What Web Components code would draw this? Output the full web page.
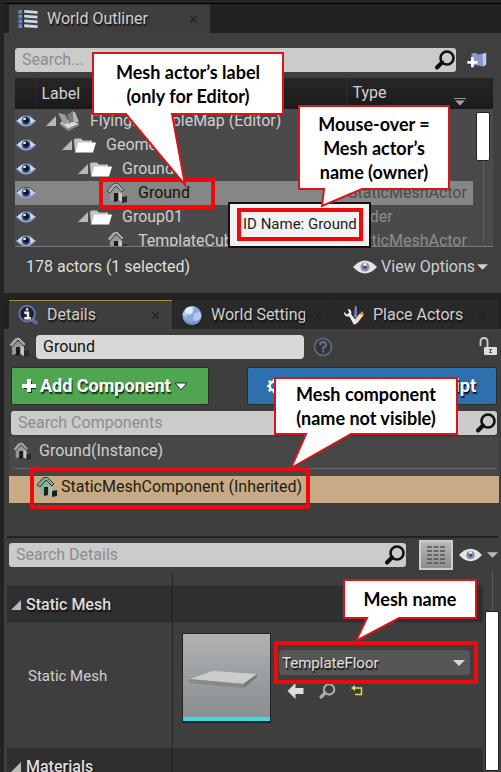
<!DOCTYPE html>
<html lang="en">
<head>
<meta charset="utf-8">
<title>World Outliner and Details</title>
<style>
  html { background: #232323; }
  body { margin: 0; min-height: 100vh; background: #232323; color: #cfcfcf; font: 16px/24px Roboto, "Liberation Sans", sans-serif; }
</style>
</head>
<body>
<ue-editor></ue-editor>
<script>
const ICONS = {
  outliner: ['0 0 22 22', `<path d="M1 1h4v4H1zM1 6h4v4H1zM1 11h4v4H1zM1 16h4v4H1z" fill="#6484c4"/><path d="M7 1l14 1v3L7 4zM7 6l14 1v3L7 9zM7 11l14 1v3L7 14zM7 16l14 1v3L7 19z" fill="#cfd6e6"/><path d="M6 1v19" stroke="#222d48"/>`],
  info: ['0 0 24 22', `<path d="M15 14l7 6" stroke="#5c6a8e" stroke-width="4"/><circle cx="11" cy="9" r="8.5" fill="#1d2233" stroke="#6279ad" stroke-width="2"/><path d="M11 3v2.600M8 8h4v6M8 14h7" stroke="#f2f2f2" stroke-width="2.500" fill="none"/>`],
  globe: ['0 0 22 22', `<circle cx="11" cy="11" r="10" fill="#8ba6da"/><path d="M3 6q5-6 11-4l-3 5-4 1-2 5-4-3zM13 9l6-2 2 5-5 6-4-3z" fill="#b5c8ee"/><circle cx="8" cy="6" r="4" fill="#eef4ff" opacity=".8"/><path d="M4 17q7 5 14-1" stroke="#5c76b0" fill="none"/>`],
  tools: ['0 0 24 22', `<path d="M13 1l2 0v12h-3z" fill="#6d90cf"/><path d="M21 6l2 4-7 8-3-3z" fill="#cd8e52"/><path d="M18 9l4 2-6 8-3-3z" fill="#f5d7ad"/><path d="M1 7q0 6 6 5l5 9 4-2-7-9q1-6-4-6l2 4-3 2z" fill="#f0f0f0"/>`],
  close: ['0 0 10 10', `<path d="M1.500 1.500l7 7m0-7l-7 7" stroke="#222" stroke-width="1.600"/>`],
  mag: ['0 0 20 20', `<circle cx="12" cy="8" r="6.500" fill="none" stroke="currentColor" stroke-width="2.600"/><path d="M7 12.500l-5 5" stroke="currentColor" stroke-width="4" stroke-linecap="round"/>`],
  newfolder: ['0 0 24 20', `<path d="M6 3l5-1 2 2 9-2v13l-3 2L6 15z" fill="#8798cc"/><path d="M18 4l4-2v13l-3 2z" fill="#c3cdeb"/><path d="M7 7v11M1.500 12.500h11" stroke="#fff" stroke-width="3"/>`],
  eye: ['0 0 20 14', `<path d="M0 7Q10-5 20 7Q10 18 0 7z" fill="#8fa3cf"/><path d="M1 6.500Q10-3 19 6.500Q10 14 1 6.500z" fill="#c9d6ee"/><circle cx="10" cy="6.500" r="4.300" fill="#2d4474"/><circle cx="10" cy="6.500" r="2.200" fill="#070b18"/><circle cx="8.500" cy="5" r="1.300" fill="#fff"/><path d="M1 6Q10-4 19 6" fill="none" stroke="#3e5078"/>`],
  eyegrey: ['0 0 24 14', `<path d="M0 7Q12-6 24 7Q12 20 0 7z" fill="#e4e4e4"/><circle cx="12" cy="7" r="4.500" fill="#8592aa"/><circle cx="12" cy="7" r="2" fill="#46536e"/><circle cx="12" cy="4.500" r="1.500" fill="#fff"/>`],
  tri: ['0 0 10 10', `<path d="M10 0v10H0z" fill="#b9b9b9"/>`],
  caret: ['0 0 12 8', `<path d="M0 1h12L6 7z" fill="currentColor"/>`],
  sort: ['0 0 12 8', `<path d="M0 1h12" stroke="#999" stroke-width="1"/><path d="M1 3h10L6 8z" fill="#a2a2a2"/>`],
  map: ['0 0 24 22', `<path d="M2 13l9-3 12 4-12 7z" fill="#dadada"/><path d="M0 2l8 2 4 9-6 2z" fill="#9c9c9c"/><path d="M10 4l6-4 1 11-5 3z" fill="#7a7a7a"/><path d="M16 0l3 2 4 10-6 1z" fill="#b8b8b8"/><path d="M2 13l9 6 12-5v2l-12 6-9-7z" fill="#8a8a8a"/>`],
  folder: ['0 0 22 16', `<path d="M0 3q0-2 2-2h5l2 2h9v3H4L1 14z" fill="#c4c4c4"/><path d="M4 5h18l-3 10H1z" fill="#fff"/><path d="M1 15h18" stroke="#aaa"/>`],
  house: ['0 0 20 20', `<path d="M3 9l6-5 6 5v10l-6-3-6 2z" fill="#979797"/><path d="M7 10h4v8l-4 1z" fill="#1b1b1b"/><path d="M0 8L6 1l4-1 7 7-2 2-6-6-6 7z" fill="#a8a8a8" stroke="#3c3c3c" stroke-width=".9"/><path d="M12 9l3 2v8l-3-2z" fill="#c6c6c6"/><path d="M15 14l5-1v6l-5 1z" fill="#292929"/>`],
  housegreen: ['0 0 20 20', `<path d="M3 9l6-5 6 5v10l-6-3-6 2z" fill="#94afa0"/><path d="M7 10h4v8l-4 1z" fill="#15251f"/><path d="M0 8L6 1l4-1 7 7-2 2-6-6-6 7z" fill="#86a696" stroke="#283c33"/><path d="M12 9l3 2v8l-3-2z" fill="#acc6b9"/><path d="M15 14l5-1v6l-5 1z" fill="#17211d"/>`],
  help: ['0 0 20 20', `<circle cx="10" cy="10" r="8.500" fill="#30343c" stroke="#5d6470" stroke-width="2"/><path d="M7 8q0-3 3-3t3 3q0 1.500-3 3v1.500M10 13.500v2" fill="none" stroke="#6d7584" stroke-width="2"/>`],
  lock: ['0 0 18 20', `<path d="M1.500 9V5q0-4 3.500-4t3.500 4v5" fill="none" stroke="#cfcfcf" stroke-width="1.800"/><rect x="5" y="10" width="13" height="8" rx="1" fill="#dedede"/><path d="M11.500 12v4M10 12.500h3M10 15.500h3" stroke="#555"/>`],
  plus: ['0 0 14 14', `<path d="M7 1v12M1 7h12" stroke="#143616" stroke-width="4" transform="translate(1 1)"/><path d="M7 0v13M0 7h14" stroke="#fff" stroke-width="4"/>`],
  caretline: ['0 0 12 10', `<path d="M0 2h12L6 9z" fill="#fff" stroke="#173419"/>`],
  gear: ['0 0 16 16', `<circle cx="8" cy="8" r="5" fill="none" stroke="#fff" stroke-width="3"/><path d="M8 0v4M8 12v4M0 8h4M12 8h4M2 2l3 3M11 11l3 3M2 14l3-3M11 5l3-3" stroke="#fff" stroke-width="2.500"/>`],
  grid: ['0 0 18 20', `<path d="M0 2h18M0 6h18M0 10h18M0 14h18M0 18h18" stroke="#666" stroke-width="2" stroke-dasharray="5 1.500"/>`],
  back: ['0 0 16 16', `<path d="M0 8l8-8v5h8v6H8v5z" fill="#dedede"/>`],
  reset: ['0 0 12 12', `<path d="M2 3h8.500v6.500H4" fill="none" stroke="#dcdc58" stroke-width="1.500"/><path d="M0 3l4-3v6z" fill="#dcdc58"/>`],
  floor: ['0 0 87 83', `<defs><linearGradient id="g" x2="0" y2="1"><stop offset="0" stop-color="#b2b3b4"/><stop offset=".5" stop-color="#9a9fa2"/><stop offset="1" stop-color="#8d9093"/></linearGradient><pattern id="p" width="4" height="4" patternUnits="userSpaceOnUse" patternTransform="rotate(-35)"><path d="M0 0h4" stroke="#7d8083"/></pattern></defs><path d="M0 0h87v83H0z" fill="url(#g)"/><path d="M0 52h87v31H0z" fill="url(#p)" opacity=".4"/><path d="M7 45l23-8 44 3-13 10z" fill="#cbcdcd"/><path d="M6 45l54 5v4L6 49z" fill="#858989"/><path d="M60 50l14-10v3L61 54z" fill="#747979"/>`]
};
const make = (name, html) => customElements.define(name, class extends HTMLElement {
  connectedCallback() {
    if (this.shadowRoot) return;
    const t = document.createElement('template');
    t.innerHTML = typeof html === 'function' ? html(this) : html;
    this.attachShadow({ mode: 'open' }).append(t.content.cloneNode(true));
  }
});

make('ue-icon', el => {
  const [box, art] = ICONS[el.getAttribute('name')];
  return `<style>:host{display:inline-block;flex:none;width:20px;height:20px}svg{display:block;width:100%;height:100%}</style>
  <svg viewBox="${box}" aria-hidden="true">${art}</svg>`;
});

make('ue-tab', el => `<style>
  :host{display:flex;align-items:center;gap:8px;box-sizing:border-box;height:29px;padding:0 8px;background:#292929;border-top:1px solid #303030;text-shadow:1px 2px 1px #111;min-width:0}
  :host([active]){background:#3e3e3e}
  :host([focus]){border-top-color:#a8913a}
  .t{flex:1;min-width:0;overflow:hidden;white-space:nowrap}
  button{flex:none;display:flex;padding:0;margin-right:4px;border:0;background:none}
  button ue-icon{width:9px;height:9px}
  .i{width:22px;height:21px}
</style><ue-icon class="i" name="${el.getAttribute('icon')}"></ue-icon><span class="t"><slot></slot></span>
<button aria-label="Close tab"><ue-icon name="close"></ue-icon></button>`);

make('ue-search', el => `<style>
  :host{display:flex;align-items:center;box-sizing:border-box;height:24px;background:#cbcbcb;border-radius:3px;padding:0 1px 0 7px;color:#111;min-width:0}
  input{flex:1;min-width:0;border:0;padding:0;background:none;outline:0;font:inherit;line-height:24px;color:#111}
  input::placeholder{color:#8c8c8c;opacity:1}
</style><input type="search" aria-label="${el.getAttribute('label')}" placeholder="${el.getAttribute('label')}"><ue-icon name="mag"></ue-icon>`);

make('ue-scrollbar', `<style>
  :host{display:flex;flex-direction:column;align-items:center;width:14px}
  i{width:1px;background:#5c5c5c;flex:0 0 var(--before,0px)}
  b{width:12px;flex:0 0 var(--thumb,50px);background:#fff;border:1px solid #222;border-radius:2px;box-sizing:content-box}
  u{width:1px;background:#626262;flex:1}
</style><i></i><b></b><u></u>`);

const ROWS = [
  ['map', 0, 'FlyingExampleMap (Editor)', '', 1],
  ['folder', 1, 'Geometry', '', 1],
  ['folder', 2, 'Ground', '', 1],
  ['house', 3, 'Ground', 'StaticMeshActor', 0],
  ['folder', 2, 'Group01', 'Folder', 1],
  ['house', 3, 'TemplateCube', 'StaticMeshActor', 0]
];
make('ue-outliner', () => `<style>
  :host{display:block;position:relative;height:168px;overflow:hidden;background:#4a4a4a;border-bottom:1px solid #7b7b7b}
  table{width:100%;border-collapse:collapse;table-layout:fixed}
  col.e{width:21px}col.t{width:127px}col.s{width:20px}
  th,td{padding:0;height:24px;text-align:left;font-weight:400;white-space:nowrap;overflow:hidden}
  th{height:31px;background:#1f1f1f;background:linear-gradient(#272727,#1a1a1a);color:#d2d2d2}
  th.l{padding-left:5px;border-left:1px solid #292929}th.t{padding-left:6px;border-left:1px solid #303030}
  th.t div{display:flex;justify-content:space-between;padding-right:27px}
  th ue-icon{width:12px;height:9px;margin-top:16px}
  td button{display:flex;border:0;background:none;padding:0 0 0 1px}
  td button ue-icon{width:20px;height:14px}
  .n{display:flex;align-items:center;height:24px}
  .n .tri{width:10px;height:10px;margin-right:2px}
  .n .k{width:22px;height:20px;margin-right:10px}
  .n .folder{height:17px}
  td.t{color:#8d8d8d;padding-left:2px}
  tr.on td:not(.s){background:#868686;color:#111}tr.on td.t{color:#4a4a4a}
  ue-scrollbar{position:absolute;right:3px;top:34px;bottom:4px;--thumb:47px}
</style><table><colgroup><col class="e"><col><col class="t"><col class="s"></colgroup>
<thead><tr><th aria-label="Visible"></th><th class="l">Label</th><th class="t" colspan="2"><div>Type<ue-icon name="sort"></ue-icon></div></th></tr></thead><tbody>
${ROWS.map(([k, d, n, t, open]) => `<tr${t[0] === 'S' && n === 'Ground' ? ' class="on"' : ''}><td><button aria-label="Toggle visibility"><ue-icon name="eye"></ue-icon></button></td>
<td><div class="n" style="padding-left:${10 + d * 16}px">${open ? '<ue-icon class="tri" name="tri"></ue-icon>' : '<span class="tri"></span>'}<ue-icon class="k ${k}" name="${k}"></ue-icon>${n}</div></td><td class="t">${t}</td><td class="s"></td></tr>`).join('')}
</tbody></table><ue-scrollbar></ue-scrollbar>`);

make('ue-callout', el => {
  const [w, h, x1, x2, tx, ty] = el.getAttribute('shape').split(' ').map(Number);
  return `<style>
  :host{position:absolute;z-index:3;box-sizing:border-box;width:${w}px;height:${h}px;display:flex;align-items:center;justify-content:center;text-align:center;color:#000;font:bold 18px/24px Lato,"Open Sans",sans-serif}
  svg{position:absolute;left:0;top:0;width:100%;height:100%;overflow:visible}
  span{position:relative;white-space:nowrap}
</style><svg aria-hidden="true"><path d="M1 1H${w - 1}V${h - 1}H${x2}L${tx} ${ty}L${x1} ${h - 1}H1z" fill="#fff" stroke="#d8151a" stroke-width="2"/></svg><span><slot></slot></span>`;
});

make('ue-mark', `<style>:host{position:absolute;z-index:2;box-sizing:border-box;border:4px solid #ee0a0c;pointer-events:none}</style>`);

make('ue-tooltip', `<style>
  :host{position:absolute;z-index:2;box-sizing:border-box;padding:4px 6px 5px 7px;background:#f2f2f2;border:2px solid #111;color:#222}
  span{display:block;border:4px solid #ee0a0c;padding:0 2px;font-size:15px;line-height:25px;white-space:nowrap}
</style><span role="tooltip"><slot></slot></span>`);

make('ue-world-outliner', `<style>
  :host{display:block;position:relative}
  .tabs{display:flex;padding-left:5px;background:#222}
  ue-tab{width:201px}
  .body{background:#3f3f3f;padding:15px 8px 0 11px}
  .find{display:flex;align-items:center;margin-bottom:6px}
  ue-search{flex:1;margin-right:10px}
  .find button{display:flex;border:0;background:none;padding:0;margin-right:5px}
  .find button ue-icon{width:22px}
  .foot{display:flex;justify-content:space-between;align-items:center;height:39px;padding:0 5px 7px 11px;color:#dedede}
  .foot button{display:flex;align-items:center;gap:4px;border:0;background:none;padding:0;font:inherit;color:#d0d0d0}
  .eye{width:24px;height:14px}.car{width:11px;height:8px;margin-left:-2px}
</style>
<div class="tabs"><ue-tab active icon="outliner">World Outliner</ue-tab></div>
<div class="body"><div class="find"><ue-search label="Search..."></ue-search><button aria-label="New folder"><ue-icon name="newfolder"></ue-icon></button></div>
<ue-outliner></ue-outliner>
<div class="foot"><span>178 actors (1 selected)</span><button><ue-icon class="eye" name="eyegrey"></ue-icon>View Options<ue-icon class="car" name="caret"></ue-icon></button></div></div>
<ue-mark style="left:95px;top:174px;width:116px;height:31px"></ue-mark>
<ue-tooltip style="left:224px;top:198px">ID Name: Ground</ue-tooltip>
<ue-callout shape="192 63 34 80 93 133" style="left:88px;top:48px">Mesh actor’s label<br>(only for Editor)</ue-callout>
<ue-callout shape="152 85 26 64 24 101" style="left:294px;top:101px">Mouse-over =<br>Mesh actor’s<br>name (owner)</ue-callout>`);

make('ue-category', `<style>
  :host{display:grid;grid-template-columns:165px 1fr;height:38px;background:#2f2f2f;border-top:1px solid #383838;border-bottom:1px solid #383838;box-sizing:border-box;font-weight:500;color:#dedede;text-shadow:1px 2px 1px #111}
  button{display:flex;align-items:center;gap:5px;border:0;border-right:1px solid #232323;background:none;padding:2px 0 0 4px;font:inherit;color:inherit;text-shadow:inherit}
  ue-icon{width:10px;height:10px}
</style><button><ue-icon name="tri"></ue-icon><slot></slot></button>`);

make('ue-details', `<style>
  :host{display:block;position:relative;flex:1}
  .tabs{display:grid;grid-template-columns:163fr 161fr 163fr;gap:1px;padding:0 3px 0 5px;background:#222}
  .body{background:#3e3e3e;position:relative}
  .name{display:flex;align-items:center;padding:6px 3px 0 5px}
  .name input{width:268px;flex:0 1 268px;min-width:0;box-sizing:border-box;height:24px;border:0;border-radius:4px;background:#d8d8d8;padding:0 7px;font:inherit;line-height:24px;color:#111;margin:0 9px 0 7px}
  .name button{border:0;background:none;padding:0;display:flex;margin-left:auto}
  .acts{display:grid;grid-template-columns:198fr 250fr;gap:38px;padding:8px 4px 6px 7px}
  .acts button{display:flex;align-items:center;height:38px;border:1px solid #2c2c2c;border-radius:2px;padding:0 10px;background:#4fa550;color:#fff;font:bold 18px/24px Roboto,sans-serif;text-shadow:1px 2px 1px #143616;gap:4px;white-space:nowrap;overflow:hidden}
  .acts button.b{background:#2d70ae;text-shadow:1px 2px 1px #112;gap:6px;justify-content:space-between;padding:0 20px 0 19px}
  .acts ue-icon{width:14px;height:14px}
  .acts .c{width:12px;height:10px}
  .comp{margin:0 4px 0 7px}
  .tree{background:#474747;margin:2px 2px 0 5px;padding-bottom:7px}
  .root{display:flex;align-items:center;gap:8px;height:27px;padding-left:4px}
  .rule{height:1px;margin:4px 3px 0 4px;background:#6a6a6a}
  .kid{display:flex;align-items:center;gap:4px;height:27px;margin:0 2px 0 5px;padding:0 0 6px 28px;background:#c8ab86;color:#221b12;line-height:20px;box-sizing:border-box}
  .kid ue-icon,.root ue-icon{width:20px;height:20px}
  .root ue-icon{width:18px}
  .find{display:flex;align-items:center;margin:33px 3px 0;border-top:2px solid #222;height:32px;padding-top:1px}
  .find ue-search{flex:1;margin:0 13px 0 2px}
  .find button{display:flex;align-items:center;justify-content:center;border:0;background:none;padding:0;gap:5px;color:#bbb}
  .find .g{box-sizing:border-box;width:34px;height:30px;background:linear-gradient(#b8b8b8,#8e8e8e);border:2px solid #cdcdcd;margin-right:6px}
  .find .g ue-icon{width:18px}
  .find .e{width:23px;height:14px}.find .c{width:11px;height:8px}
  .props{position:relative;margin:0 18px 0 3px;padding-top:14px}
  .props::before{content:"";position:absolute;left:165px;top:2px;bottom:0;width:1px;background:#272727}
  .row{display:grid;grid-template-columns:165px 1fr;height:124px}
  .row label{align-self:center;padding:0 0 18px 21px;font-size:15px;line-height:20px}
  .val{display:flex;align-items:flex-start;gap:8px;padding:10px 0 0 10px}
  .thumb{box-sizing:content-box;border:1px solid #222;border-bottom-width:2px;width:87px;background:#35dfe1;padding:0 0 4px}
  .thumb ue-icon{display:block;width:87px;height:83px}
  .pick{flex:1;min-width:0;padding:17px 13px 0 0}
  .sel{display:flex;align-items:center;position:relative;color:#d8d8d8}
  select{appearance:none;width:100%;height:25px;border:0;border-radius:4px;background:#565656;padding:0 20px 0 3px;color:#e0e0e0;font:15px/24px Roboto,sans-serif;text-shadow:1px 2px 1px #111}
  .sel ue-icon{position:absolute;right:5px;width:12px;height:8px;pointer-events:none}
  .tools{display:flex;gap:15px;margin:8px 0 0 8px;color:#aaa}
  .tools button{display:flex;align-items:center;border:0;background:none;padding:0;color:inherit}
  .tools ue-icon{width:17px;height:16px}.tools .r{width:12px;height:12px}
  .bar{position:absolute;right:2px;top:242px;bottom:0;--before:40px;--thumb:158px}
</style>
<div class="tabs"><ue-tab active focus icon="info">Details</ue-tab><ue-tab icon="globe">World Settings</ue-tab><ue-tab icon="tools">Place Actors</ue-tab></div>
<div class="body">
<div class="name"><ue-icon name="house"></ue-icon><input aria-label="Actor name" value="Ground"><ue-icon name="help"></ue-icon><button aria-label="Lock details"><ue-icon name="lock"></ue-icon></button></div>
<div class="acts"><button><ue-icon name="plus"></ue-icon>Add Component<ue-icon class="c" name="caretline"></ue-icon></button><button class="b"><ue-icon name="gear"></ue-icon>Blueprint/Add Script</button></div>
<ue-search class="comp" label="Search Components"></ue-search>
<div class="tree"><div class="root"><ue-icon name="house"></ue-icon>Ground(Instance)</div><div class="rule"></div></div>
<div class="kid"><ue-icon name="housegreen"></ue-icon>StaticMeshComponent (Inherited)</div>
<div class="find"><ue-search label="Search Details"></ue-search><button class="g" aria-label="Property matrix"><ue-icon name="grid"></ue-icon></button><button aria-label="View options"><ue-icon class="e" name="eyegrey"></ue-icon><ue-icon class="c" name="caret"></ue-icon></button></div>
<div class="props"><ue-category>Static Mesh</ue-category>
<div class="row"><label for="mesh">Static Mesh</label><div class="val"><div class="thumb"><ue-icon name="floor"></ue-icon></div>
<div class="pick"><div class="sel"><select id="mesh"><option>TemplateFloor</option></select><ue-icon name="caret"></ue-icon></div>
<div class="tools"><button aria-label="Use selected asset"><ue-icon name="back"></ue-icon></button><button aria-label="Browse to asset"><ue-icon name="mag"></ue-icon></button><button aria-label="Reset to default"><ue-icon class="r" name="reset"></ue-icon></button></div></div></div></div>
<ue-category>Materials</ue-category></div>
<ue-scrollbar class="bar"></ue-scrollbar>
</div>
<ue-mark style="left:26px;top:167px;width:280px;height:42px"></ue-mark>
<ue-mark style="left:270px;top:341px;width:204px;height:43px"></ue-mark>
<ue-callout shape="184 58 32 77 17 91" style="left:270px;top:77px">Mesh component<br>(name not visible)</ue-callout>
<ue-callout shape="134 40 24 56 13 62" style="left:339px;top:279px">Mesh name</ue-callout>`);

make('ue-editor', `<style>
  :host{display:flex;flex-direction:column;box-sizing:border-box;height:100vh;overflow:hidden;padding:3px 0 0 4px;gap:7px;background:#232323}
  ue-world-outliner{border-top:1px solid #000;flex:none}
</style><ue-world-outliner></ue-world-outliner><ue-details></ue-details>`);
</script>
</body>
</html>
